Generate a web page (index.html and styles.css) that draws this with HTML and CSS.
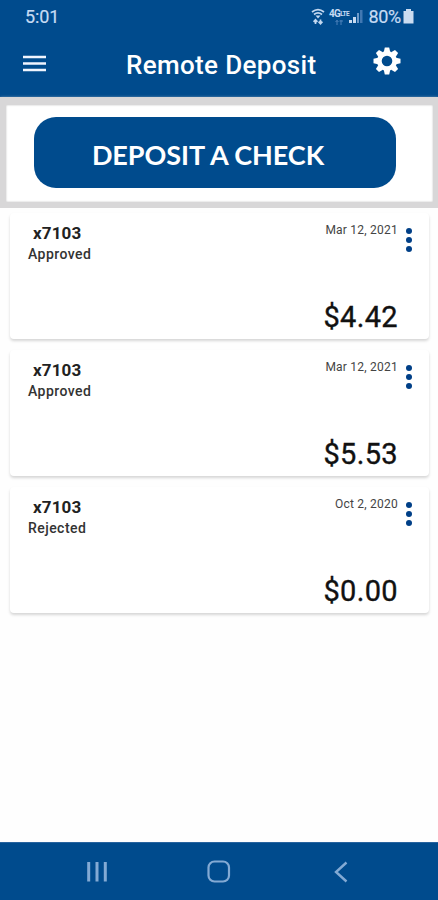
FILE: index.html
```html
<!DOCTYPE html>
<html lang="en">
<head>
<meta charset="utf-8">
<title>Remote Deposit</title>
<link rel="stylesheet" href="styles.css">
</head>
<body>
<div class="screen">
  <header class="header">
    <div class="status">
      <span class="clock">5:01</span>
      <div class="indicators">
        <svg class="wifi" width="14" height="18" viewBox="0 0 14 18" fill="none" stroke="#c3d8f0" stroke-width="1.700">
          <path d="M1 4Q7-.8 13 4M3 6.500Q7 3.200 11 6.500"/>
          <path d="M4.500 7.500h5L7 10.500z" fill="#c3d8f0" stroke="none"/>
          <path d="M4.500 16v-4M2.600 13.800l1.900-2 1.900 2M9.500 11.500v4M7.600 13.700l1.900 2 1.900-2"/>
        </svg>
        <div class="network"><span class="lte">4G<small>LTE</small></span><svg width="10" height="5" viewBox="0 0 10 5" fill="none" stroke="#4f83bb" stroke-width="1"><path d="M3 5V0M1.500 2L3 .5 4.500 2M7 0v5M5.500 1H9"/></svg></div>
        <svg class="signal" width="14" height="14" viewBox="0 0 14 14"><path fill="#c7daf0" d="M0 10h3v3H0zM4 7h3v6H4z"/><path fill="#6f9bca" d="M8 3h2v10H8z"/><path fill="#4178b2" d="M11 0h2.500v13H11z"/></svg>
        <span class="percent">80%</span>
        <svg class="battery" width="11" height="15" viewBox="0 0 11 15"><path fill="#cbdcf1" d="M3 0h5v2h2.500v12.500H.5V2H3z"/></svg>
      </div>
    </div>
    <div class="toolbar">
      <svg class="menu" width="23" height="17" viewBox="0 0 23 17"><path stroke="#f0f5ff" stroke-width="2.700" d="M0 2h23M0 8.500h23M0 15h23"/></svg>
      <h1 class="title">Remote Deposit</h1>
      <svg class="gear" width="28" height="28" viewBox="-14 -14 28 28" fill="#fff">
        <path fill-rule="evenodd" d="M-10 0a10 10 0 1 0 20 0a10 10 0 1 0-20 0M-5.300 0a5.300 5.300 0 1 0 10.600 0a5.300 5.300 0 1 0-10.600 0"/>
        <g id="teeth"><path id="tooth" d="M-3.200-9L-2.200-13.500H2.200L3.200-9z"/><use href="#tooth" transform="rotate(45)"/><use href="#tooth" transform="rotate(90)"/><use href="#tooth" transform="rotate(135)"/></g>
        <use href="#teeth" transform="rotate(180)"/>
      </svg>
    </div>
  </header>
  <section class="action"><button class="deposit">DEPOSIT A CHECK</button></section>
  <main class="list">
    <article class="card">
      <div class="info"><span class="account">x7103</span><span class="state">Approved</span></div>
      <div class="values"><span class="date">Mar 12, 2021</span><span class="amount">$4.42</span></div>
      <div class="more"><i></i><i></i><i></i></div>
    </article>
    <article class="card">
      <div class="info"><span class="account">x7103</span><span class="state">Approved</span></div>
      <div class="values"><span class="date">Mar 12, 2021</span><span class="amount">$5.53</span></div>
      <div class="more"><i></i><i></i><i></i></div>
    </article>
    <article class="card">
      <div class="info"><span class="account">x7103</span><span class="state">Rejected</span></div>
      <div class="values"><span class="date">Oct 2, 2020</span><span class="amount">$0.00</span></div>
      <div class="more"><i></i><i></i><i></i></div>
    </article>
  </main>
  <nav class="nav">
    <svg width="20" height="22" viewBox="0 0 20 22"><path stroke="#83aad4" stroke-width="3" d="M1.700 1v19.500M10 1v19.500M18.300 1v19.500"/></svg>
    <svg class="home" width="24" height="24" viewBox="0 0 24 24"><rect x="1.500" y="1.500" width="20.500" height="20" rx="6" fill="none" stroke="#83aad4" stroke-width="2.200"/></svg>
    <svg width="14" height="22" viewBox="0 0 14 22"><path fill="none" stroke="#83aad4" stroke-width="2.400" d="M12.500 1.500L2 11l10.500 9.500"/></svg>
  </nav>
</div>
</body>
</html>
```
FILE: styles.css
```css
* { box-sizing: border-box; }
body { margin: 0; font-family: Roboto, sans-serif; background: #fefefe; }
.screen { width: 438px; height: 900px; display: flex; flex-direction: column; overflow: hidden; }
.header { height: 97px; flex: none; background: #004b8d; }
.status { height: 33px; padding: 0 24px 0 25px; display: flex; justify-content: space-between; align-items: center; color: #c7dbf3; font-size: 18px; font-weight: 400; line-height: 33px; }
.clock { letter-spacing: -.1px; -webkit-text-stroke: .2px; }
.indicators { display: flex; align-items: center; }
.wifi { margin-right: 3px; }
.network { width: 21px; height: 16px; display: flex; flex-direction: column; align-items: center; font-size: 10px; font-weight: 700; line-height: 9px; gap: 1px; }
.lte { letter-spacing: -.6px; white-space: nowrap; }
.lte small { font-size: 6.5px; vertical-align: 1px; }
.signal { margin: 0 5px 0 0; }
.percent { letter-spacing: -.3px; -webkit-text-stroke: .2px; }
.battery { margin-left: 2px; }
.toolbar { height: 64px; padding: 0 37px 0 23px; display: flex; align-items: flex-start; }
.menu { margin-top: 22px; }
.title { margin: 15px 0 0 80px; width: 199px; font-size: 26px; line-height: 34px; font-weight: 500; letter-spacing: .35px; color: #fff; white-space: nowrap; }
.gear { margin: 14px 0 0 48px; flex: none; }
.action { flex: none; height: 111px; padding: 12px 31px 0 28px; background: #fff; border: solid #d8d7d8; border-width: 8px 5px 6px 6px; box-shadow: inset 0 0 2px #bbb, 0 1px 3px #ddd; }
.deposit { display: block; width: 362px; height: 71px; padding: 4px 14px 0 0; margin: 0; border: 0; border-radius: 22px; background: #004b8d; color: #fff; font: 700 27px/1 Lato, sans-serif; letter-spacing: -.05px; white-space: nowrap; }
.list { flex: 1; padding: 5px 9px 0 10px; display: flex; flex-direction: column; gap: 11px; background: #fefefe; }
.card { height: 126px; flex: none; display: flex; padding: 0 16px 0 18px; background: #fff; border-radius: 4px; box-shadow: 0 2px 3px rgba(0,0,0,.16); }
.info { flex: 1; display: flex; flex-direction: column; }
.account { margin: 9px 0 0 5px; font-size: 17px; line-height: 22px; font-weight: 700; letter-spacing: .15px; color: #222; }
.state { font-size: 14px; line-height: 20px; font-weight: 500; letter-spacing: .45px; color: #333; }
.values { display: flex; flex-direction: column; align-items: flex-end; margin-right: 8px; }
.date { margin-top: 9px; font-size: 12px; line-height: 16px; letter-spacing: .23px; color: #444; }
.amount { margin-top: 61px; font-size: 29px; line-height: 36px; letter-spacing: .35px; -webkit-text-stroke: .35px; color: #111; }
.more { width: 6px; padding-top: 15px; display: flex; flex-direction: column; gap: 3px; }
.more i { width: 6px; height: 6px; border-radius: 50%; background: #003f87; }
.more { margin-right: 1px; }
.nav { flex: none; height: 58px; padding: 0 90px 0 87px; display: flex; justify-content: space-between; align-items: center; background: #004b8d; border-top: 1px solid #27639f; }
.home { margin-right: 4px; }
```
